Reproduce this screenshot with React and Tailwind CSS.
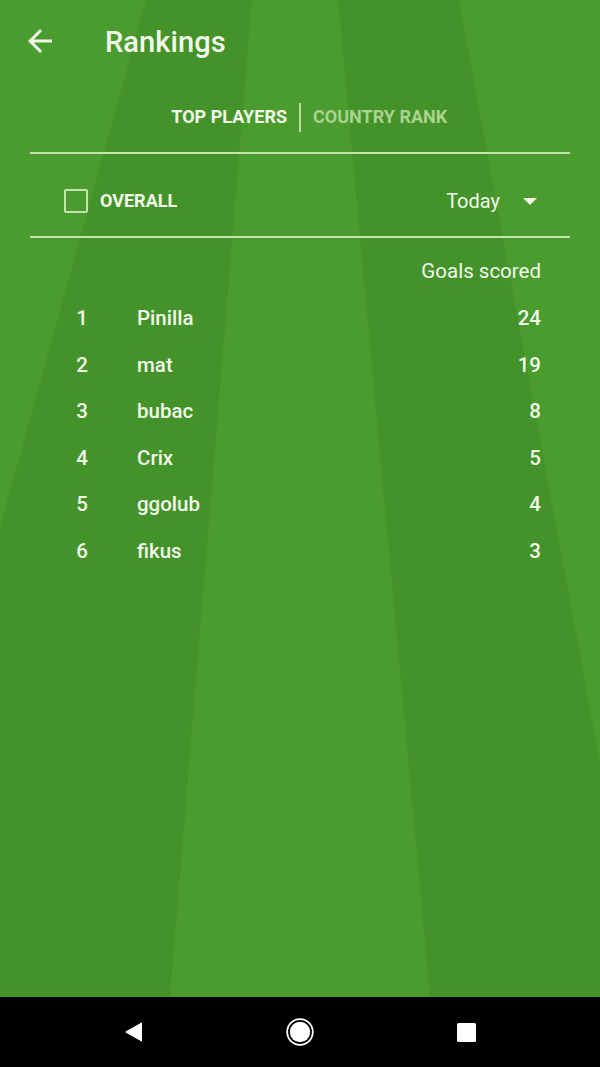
import React from "react";

const rows = [
  { rank: 1, name: "Pinilla", goals: 24 },
  { rank: 2, name: "mat", goals: 19 },
  { rank: 3, name: "bubac", goals: 8 },
  { rank: 4, name: "Crix", goals: 5 },
  { rank: 5, name: "ggolub", goals: 4 },
  { rank: 6, name: "fikus", goals: 3 },
];

function Field() {
  return (
    <svg
      className="absolute inset-0 w-full h-full"
      viewBox="0 0 600 997"
      preserveAspectRatio="none"
    >
      <rect x="0" y="0" width="600" height="997" fill="#44932a" />
      <polygon points="252,0 338,0 430,997 170,997" fill="#4b9c2e" />
      <polygon points="0,0 146,0 0,527" fill="#4b9c2e" />
      <polygon points="459,0 600,0 600,763" fill="#4b9c2e" />
    </svg>
  );
}

export default function App() {
  return (
    <div
      className="w-[600px] h-[1067px] flex flex-col overflow-hidden text-[#f1f8e9]"
      style={{ fontFamily: "Roboto, 'Noto Sans', Arial, sans-serif" }}
    >
      <div className="relative h-[997px] flex-none">
        <Field />
        <div className="relative flex flex-col">
          {/* header */}
          <div className="h-[82px] flex items-center pl-[22px]">
            <svg viewBox="0 0 24 24" className="w-9 h-9" fill="#f1f8e9">
              <path d="M20 11H7.83l5.59-5.59L12 4l-8 8 8 8 1.41-1.41L7.83 13H20v-2z" />
            </svg>
            <div className="ml-[47px] mt-[2px] text-[29px] font-medium leading-none tracking-[0.1px]">
              Rankings
            </div>
          </div>

          {/* tabs */}
          <div className="h-[70px] flex items-center">
            <div className="flex-1 flex justify-end pr-3 text-[18px] font-bold leading-none">
              TOP PLAYERS
            </div>
            <div className="w-[2px] h-[29px] bg-[#b9dca0]" />
            <div className="flex-1 flex justify-start pl-3 text-[18px] font-bold leading-none text-[#a9d38f]">
              COUNTRY RANK
            </div>
          </div>

          <div className="mx-[30px] h-[2px] bg-[#c5e3ac]" />

          {/* filter row */}
          <div className="h-[82px] pt-3 flex items-center pl-[64px] pr-[63px]">
            <div className="w-6 h-6 rounded-[2px] border-2 border-[#c5e3ac]" />
            <div className="ml-3 text-[18px] font-bold leading-none">OVERALL</div>
            <div className="flex-1" />
            <div className="text-[20px] leading-none">Today</div>
            <svg viewBox="0 0 14 7" className="ml-[23px] w-[14px] h-[7px]" fill="#f1f8e9">
              <polygon points="0,0 14,0 7,7" />
            </svg>
          </div>

          <div className="mx-[30px] h-[2px] bg-[#c5e3ac]" />

          {/* table */}
          <div className="mt-[10px] h-[47px] flex items-center justify-end pr-[59px] text-[20.5px] leading-none">
            Goals scored
          </div>
          {rows.map((r) => (
            <div
              key={r.rank}
              className="h-[46.6px] flex items-center text-[20.5px] font-medium leading-none"
            >
              <div className="ml-[62px] w-[40px] text-center">{r.rank}</div>
              <div className="ml-[35px] flex-1">{r.name}</div>
              <div className="pr-[59px] text-right">{r.goals}</div>
            </div>
          ))}
        </div>
      </div>

      {/* nav bar */}
      <div className="h-[70px] flex-none bg-black flex items-center justify-center gap-[143px]">
        <svg viewBox="0 0 18 20" className="w-[18px] h-[20px]" fill="#ffffff">
          <path d="M17 1.2 L17 18.8 Q17 19.8 16.1 19.3 L1 10.8 Q0 10 1 9.2 L16.1 0.7 Q17 0.2 17 1.2 Z" />
        </svg>
        <svg viewBox="0 0 28 28" className="w-[28px] h-[28px]">
          <circle cx="14" cy="14" r="12.8" fill="none" stroke="#ffffff" strokeWidth="1.8" />
          <circle cx="14" cy="14" r="10.2" fill="#ffffff" />
        </svg>
        <div className="w-[19px] h-[19px] bg-white rounded-[1.5px]" />
      </div>
    </div>
  );
}
